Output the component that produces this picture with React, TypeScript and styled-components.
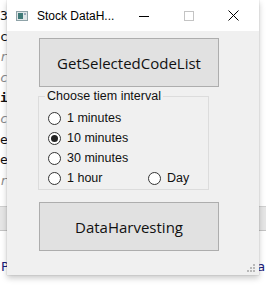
import React, { useState } from "react";
import styled, { createGlobalStyle } from "styled-components";

const GlobalStyle = createGlobalStyle`
  html, body { margin: 0; padding: 0; }
  body {
    font-family: "Liberation Sans", Arial, sans-serif;
    background: #ffffff;
  }
`;

const Desktop = styled.div`
  position: relative;
  width: 266px;
  height: 289px;
  overflow: hidden;
  background: #ffffff;
`;

const CodeBehind = styled.div`
  display: flex;
  flex-direction: column;
  padding-top: 6px;
  font-family: "DejaVu Sans Mono", monospace;
  font-size: 13px;
  line-height: 20.6px;
`;

const CodeLine = styled.div<{ $muted?: boolean; $bold?: boolean }>`
  height: 20.6px;
  color: ${(p) => (p.$muted ? "#8a8a8a" : "#111")};
  font-style: ${(p) => (p.$muted ? "italic" : "normal")};
  font-weight: ${(p) => (p.$bold ? "bold" : "normal")};
  white-space: nowrap;
`;

const Band = styled.div`
  position: absolute;
  left: 0;
  right: 0;
  top: 206px;
  height: 23px;
  background: #e6e6e6;
  border-top: 1px solid #d0d0d0;
  border-bottom: 1px solid #c4c4c4;
`;

const StatusText = styled.div`
  position: absolute;
  left: 0;
  right: 0;
  top: 259px;
  display: flex;
  justify-content: space-between;
  padding: 0 1px;
  font-family: "DejaVu Sans Mono", monospace;
  font-size: 13px;
  color: #1c1c7a;
`;

const Window = styled.div`
  position: absolute;
  left: 7px;
  top: 0;
  width: 252px;
  height: 275px;
  display: flex;
  flex-direction: column;
  background: #f0f0f0;
  box-shadow: 0 3px 6px rgba(0, 0, 0, 0.22), 0 0 1px rgba(0, 0, 0, 0.25);
`;

const TitleBar = styled.div`
  height: 31px;
  flex: none;
  display: flex;
  align-items: center;
  padding-right: 3px;
  background: #ffffff;
  font-size: 12px;
  color: #000;
`;

const AppIcon = styled.svg`
  margin-left: 9px;
  margin-right: 9px;
`;

const Title = styled.span`
  flex: 1;
  white-space: nowrap;
`;

const Caption = styled.div`
  width: 45px;
  height: 31px;
  display: flex;
  align-items: center;
  justify-content: center;
`;

const Body = styled.div`
  flex: 1;
  position: relative;
  display: flex;
  flex-direction: column;
  padding: 7px 0 0 32px;
`;

const Button = styled.button`
  width: 180px;
  height: 49px;
  background: #e1e1e1;
  border: 1px solid #adadad;
  font-family: "Open Sans", "Noto Sans", sans-serif;
  font-size: 15px;
  color: #111;
  padding: 0;
  cursor: pointer;
`;

const Group = styled.fieldset`
  width: 171px;
  height: 100px;
  box-sizing: border-box;
  margin: 3px 0 12px -1px;
  padding: 6px 0 0 9px;
  border: 1px solid #dcdcdc;
  display: grid;
  grid-template-columns: 100px auto;
  grid-auto-rows: 20px;
  align-items: center;
`;

const Legend = styled.legend`
  font-size: 12.5px;
  color: #111;
  padding: 0 2px;
  margin-left: -3px;
  line-height: 12px;
`;

const Option = styled.label<{ $span?: boolean }>`
  display: flex;
  align-items: center;
  gap: 6px;
  font-size: 12.5px;
  color: #111;
  grid-column: ${(p) => (p.$span ? "1 / span 2" : "auto")};
  cursor: pointer;
`;

const Dot = styled.span<{ $on: boolean }>`
  width: 11px;
  height: 11px;
  border: 1px solid #333;
  border-radius: 50%;
  background: #fff;
  display: flex;
  align-items: center;
  justify-content: center;
  &::after {
    content: "";
    width: 7px;
    height: 7px;
    border-radius: 50%;
    background: ${(p) => (p.$on ? "#222" : "transparent")};
  }
`;

const Grip = styled.svg`
  position: absolute;
  right: 3px;
  bottom: 2px;
`;

const intervals = ["1 minutes", "10 minutes", "30 minutes"];

export default function App() {
  const [choice, setChoice] = useState("10 minutes");

  return (
    <>
      <GlobalStyle />
      <Desktop>
        <CodeBehind>
          <CodeLine>3</CodeLine>
          <CodeLine>c</CodeLine>
          <CodeLine $muted>r</CodeLine>
          <CodeLine $muted>c</CodeLine>
          <CodeLine $bold>i</CodeLine>
          <CodeLine $muted>c</CodeLine>
          <CodeLine>e</CodeLine>
          <CodeLine>e</CodeLine>
          <CodeLine $muted>r</CodeLine>
        </CodeBehind>
        <Band />
        <StatusText>
          <span>P</span>
          <span>a</span>
        </StatusText>

        <Window>
          <TitleBar>
            <AppIcon width="12" height="10" viewBox="0 0 12 10">
              <rect x="0.5" y="0.5" width="11" height="9" fill="#dfe6e8" stroke="#8fa3a8" />
              <rect x="2" y="2" width="5" height="6" fill="#3f7a78" />
              <rect x="8" y="2" width="2" height="2" fill="#9ab" />
            </AppIcon>
            <Title>Stock DataH...</Title>
            <Caption>
              <svg width="10" height="10" viewBox="0 0 10 10">
                <line x1="0" y1="5.5" x2="10" y2="5.5" stroke="#000" strokeWidth="1" />
              </svg>
            </Caption>
            <Caption>
              <svg width="10" height="10" viewBox="0 0 10 10">
                <rect x="0.5" y="0.5" width="9" height="9" fill="none" stroke="#c4c4c4" />
              </svg>
            </Caption>
            <Caption>
              <svg width="11" height="11" viewBox="0 0 11 11">
                <path d="M0.5 0.5 L10.5 10.5 M10.5 0.5 L0.5 10.5" stroke="#000" strokeWidth="1" />
              </svg>
            </Caption>
          </TitleBar>

          <Body>
            <Button>GetSelectedCodeList</Button>
            <Group>
              <Legend>Choose tiem interval</Legend>
              {intervals.map((label) => (
                <Option key={label} $span onClick={() => setChoice(label)}>
                  <Dot $on={choice === label} />
                  {label}
                </Option>
              ))}
              <Option onClick={() => setChoice("1 hour")}>
                <Dot $on={choice === "1 hour"} />1 hour
              </Option>
              <Option onClick={() => setChoice("Day")}>
                <Dot $on={choice === "Day"} />Day
              </Option>
            </Group>
            <Button>DataHarvesting</Button>
            <Grip width="9" height="9" viewBox="0 0 9 9">
              <g fill="#b8b8b8">
                <rect x="6" y="0" width="2" height="2" />
                <rect x="3" y="3" width="2" height="2" />
                <rect x="6" y="3" width="2" height="2" />
                <rect x="0" y="6" width="2" height="2" />
                <rect x="3" y="6" width="2" height="2" />
                <rect x="6" y="6" width="2" height="2" />
              </g>
            </Grip>
          </Body>
        </Window>
      </Desktop>
    </>
  );
}
